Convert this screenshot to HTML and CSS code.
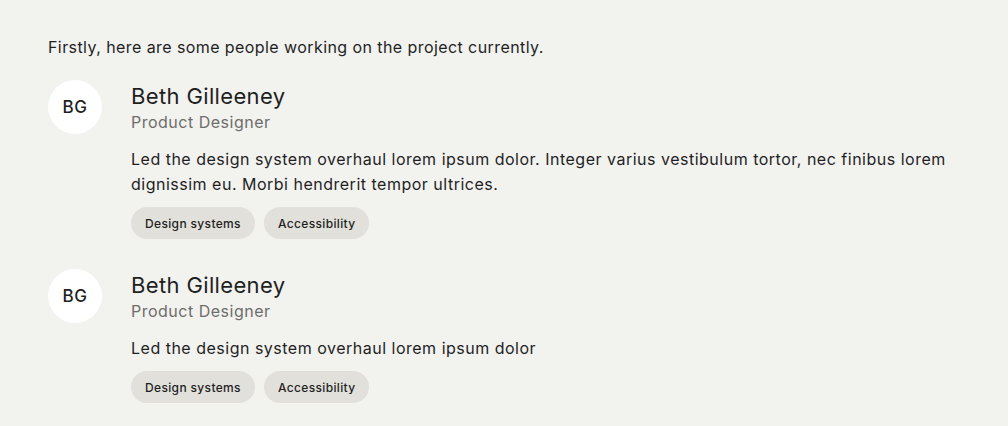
FILE: index.html
```html
<!DOCTYPE html>
<html lang="en">
<head>
<meta charset="utf-8">
<link rel="stylesheet" href="styles.css">
</head>
<body>
<main class="page">
  <p class="intro">Firstly, here are some people working on the project currently.</p>
  <ul class="people">
    <li class="person">
      <div class="avatar">BG</div>
      <div class="info">
        <h3 class="name">Beth Gilleeney</h3>
        <p class="role">Product Designer</p>
        <p class="desc">Led the design system overhaul lorem ipsum dolor. Integer varius vestibulum tortor, nec finibus lorem dignissim eu. Morbi hendrerit tempor ultrices.</p>
        <div class="tags">
          <span class="tag">Design systems</span>
          <span class="tag">Accessibility</span>
        </div>
      </div>
    </li>
    <li class="person">
      <div class="avatar">BG</div>
      <div class="info">
        <h3 class="name">Beth Gilleeney</h3>
        <p class="role">Product Designer</p>
        <p class="desc">Led the design system overhaul lorem ipsum dolor</p>
        <div class="tags">
          <span class="tag">Design systems</span>
          <span class="tag">Accessibility</span>
        </div>
      </div>
    </li>
  </ul>
</main>
</body>
</html>
```
FILE: styles.css
```css
html, body {
  margin: 0;
  padding: 0;
  background: #f2f2ef;
}
body {
  font-family: Inter, "Noto Sans", sans-serif;
  color: #1f1f1f;
}
.page {
  padding: 37px 48px 0 48px;
}
.intro {
  margin: 0;
  font-size: 16px;
  line-height: 20px;
  letter-spacing: 0.42px;
}
.people {
  list-style: none;
  margin: 23px 0 0 0;
  padding: 0;
  display: flex;
  flex-direction: column;
  gap: 30px;
}
.person {
  display: flex;
  gap: 29px;
  align-items: flex-start;
}
.avatar {
  flex: none;
  width: 54px;
  height: 54px;
  border-radius: 50%;
  background: #ffffff;
  display: flex;
  align-items: center;
  justify-content: center;
  font-size: 17px;
  font-weight: 500;
  letter-spacing: 0.6px;
}
.info {
  flex: 1;
  padding-top: 2px;
}
.name {
  margin: 0;
  font-size: 22px;
  line-height: 28px;
  font-weight: 400;
  letter-spacing: 0.36px;
}
.role {
  margin: 1px 0 0 0;
  font-size: 16px;
  line-height: 22px;
  letter-spacing: 0.5px;
  color: #6d6d6a;
}
.desc {
  margin: 14px 0 0 0;
  font-size: 16px;
  line-height: 25px;
  letter-spacing: 0.5px;
  max-width: 829px;
}
.tags {
  display: flex;
  gap: 9px;
  margin-top: 10px;
}
.tag {
  background: #e2e0da;
  border-radius: 16px;
  height: 32px;
  padding: 0 14px;
  display: flex;
  align-items: center;
  font-size: 12px;
  font-weight: 500;
  letter-spacing: 0.35px;
}
```
